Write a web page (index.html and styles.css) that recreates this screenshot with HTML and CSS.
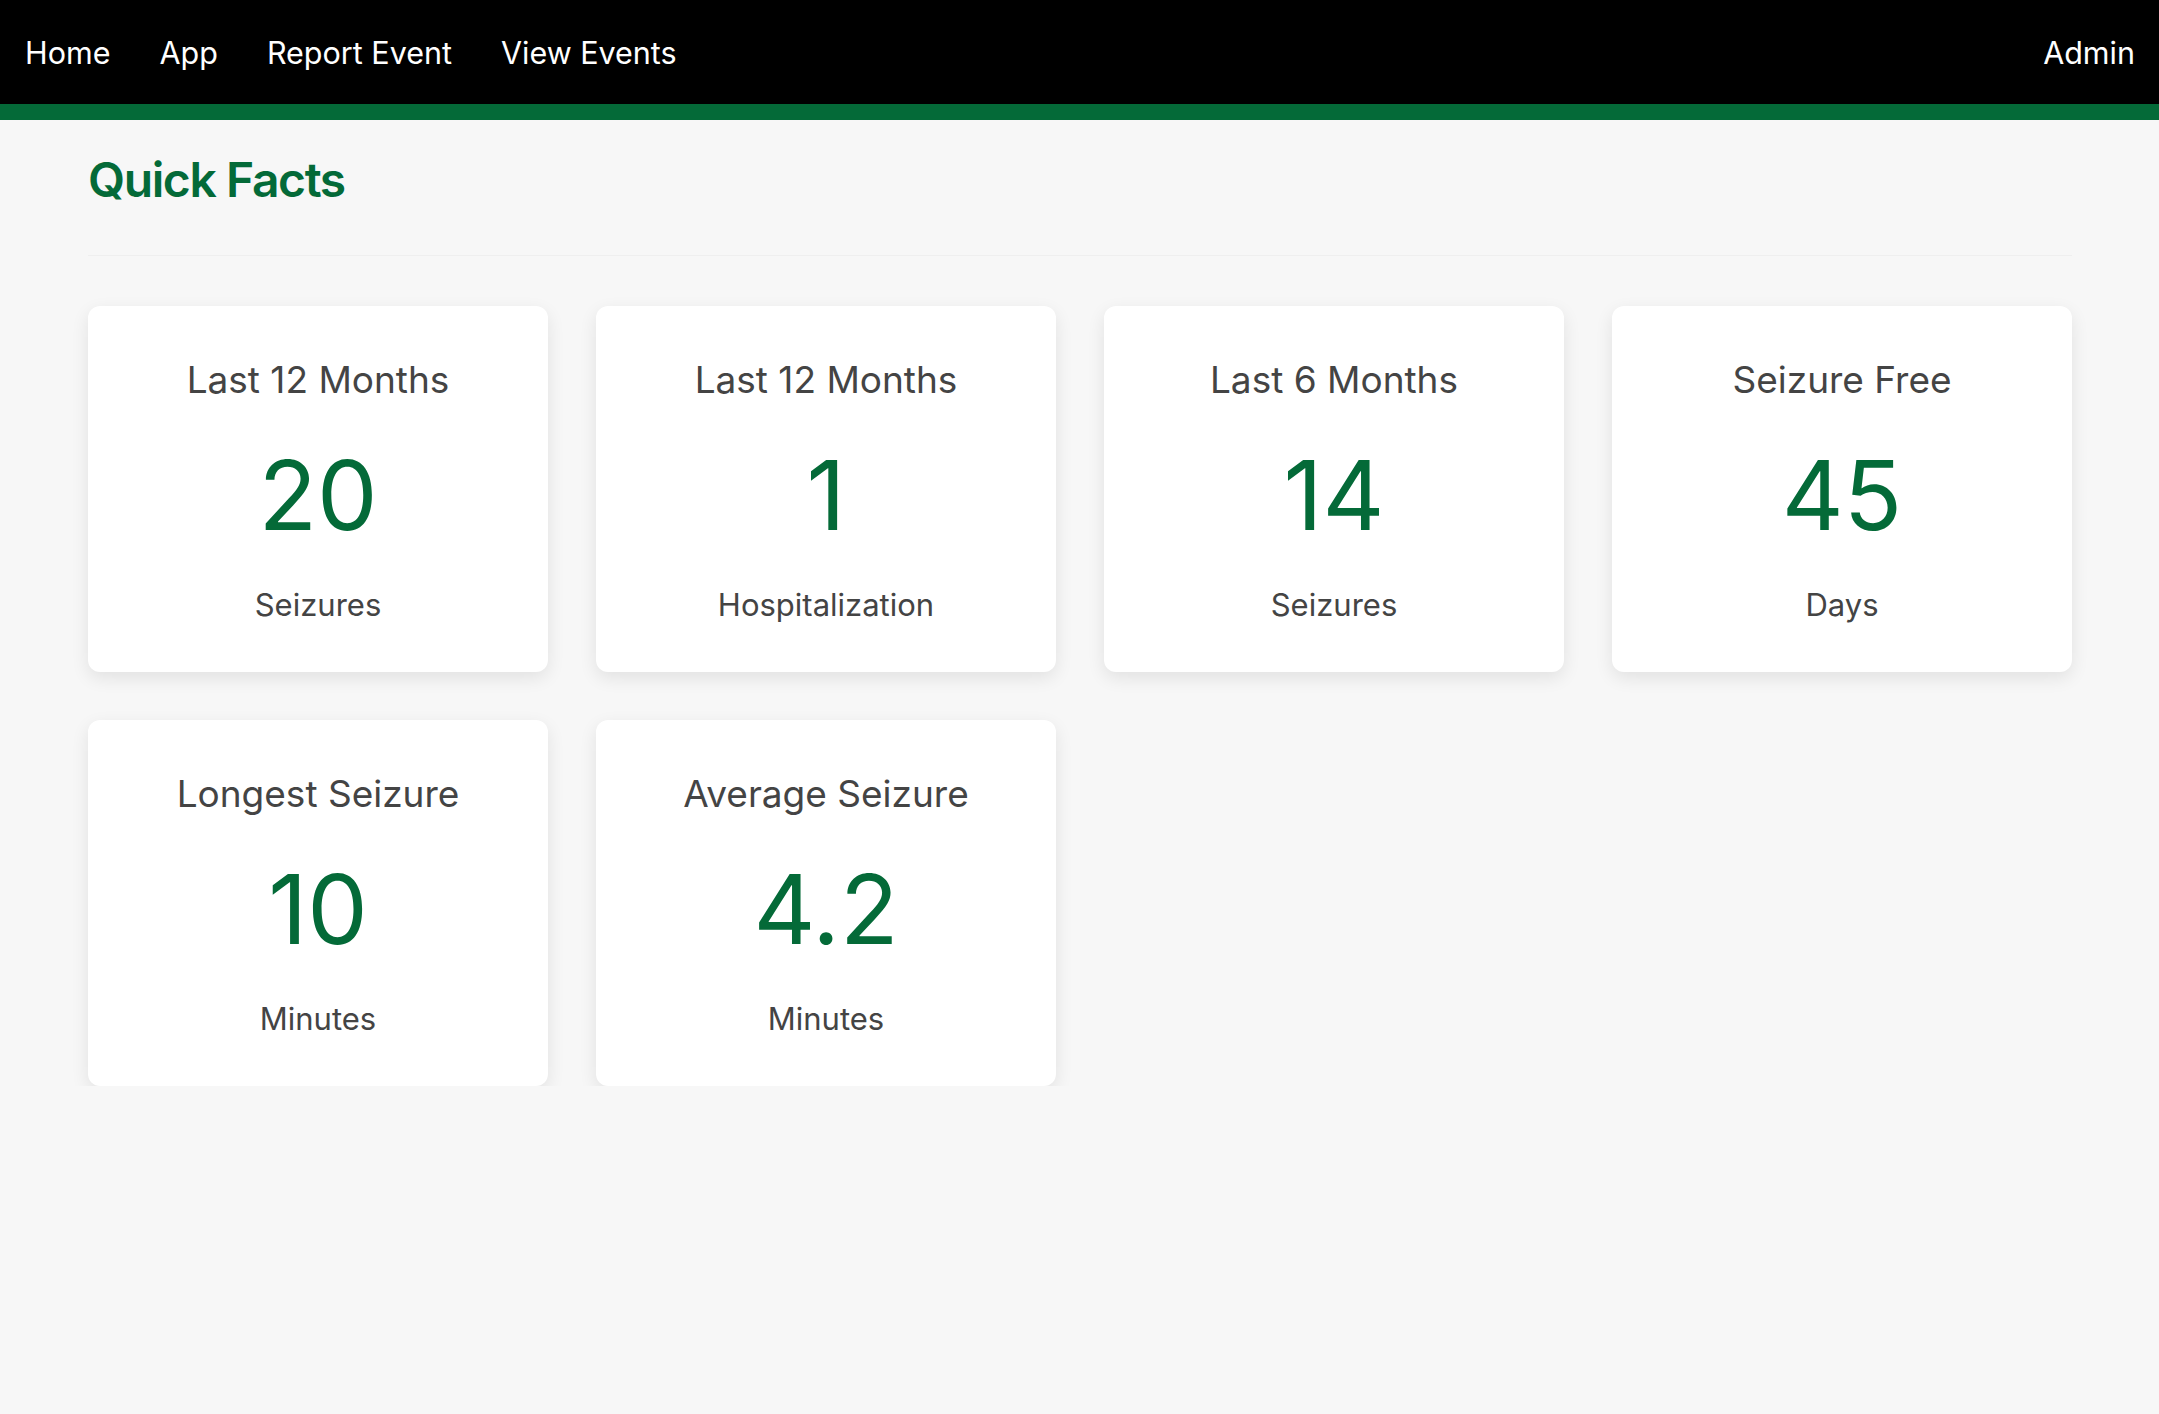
FILE: index.html
```html
<!DOCTYPE html>
<html lang="en">
<head>
<meta charset="utf-8">
<title>Quick Facts</title>
<link rel="stylesheet" href="styles.css">
</head>
<body>
<nav class="navbar">
  <div class="nav-links">
    <a class="nav-link" href="#">Home</a>
    <a class="nav-link" href="#">App</a>
    <a class="nav-link" href="#">Report Event</a>
    <a class="nav-link" href="#">View Events</a>
  </div>
  <a class="nav-link" href="#">Admin</a>
</nav>
<div class="accent-bar"></div>
<main class="container">
  <h1 class="page-title">Quick Facts</h1>
  <hr class="divider">
  <section class="facts-grid">
    <div class="fact-card">
      <div class="fact-title">Last 12 Months</div>
      <div class="fact-value">20</div>
      <div class="fact-unit">Seizures</div>
    </div>
    <div class="fact-card">
      <div class="fact-title">Last 12 Months</div>
      <div class="fact-value">1</div>
      <div class="fact-unit">Hospitalization</div>
    </div>
    <div class="fact-card">
      <div class="fact-title">Last 6 Months</div>
      <div class="fact-value">14</div>
      <div class="fact-unit">Seizures</div>
    </div>
    <div class="fact-card">
      <div class="fact-title">Seizure Free</div>
      <div class="fact-value">45</div>
      <div class="fact-unit">Days</div>
    </div>
    <div class="fact-card">
      <div class="fact-title">Longest Seizure</div>
      <div class="fact-value">10</div>
      <div class="fact-unit">Minutes</div>
    </div>
    <div class="fact-card">
      <div class="fact-title">Average Seizure</div>
      <div class="fact-value">4.2</div>
      <div class="fact-unit">Minutes</div>
    </div>
  </section>
</main>
</body>
</html>
```

FILE: styles.css
```css
* { box-sizing: border-box; }

html, body {
  margin: 0;
  padding: 0;
  background: #f7f7f7;
  font-family: Inter, "Noto Sans", "Liberation Sans", sans-serif;
}

.navbar {
  height: 104px;
  background: #000;
  display: flex;
  align-items: center;
  justify-content: space-between;
  padding: 3px 24px 0 25px;
}

.nav-links {
  display: flex;
  gap: 49px;
}

.nav-link {
  color: #fff;
  text-decoration: none;
  font-size: 30.5px;
  line-height: 1.2;
  font-weight: 400;
}

.accent-bar {
  height: 16px;
  background: #046a38;
}

.container {
  padding: 0 87px 0 88px;
}

.page-title {
  margin: 31px 0 0 0;
  font-size: 48px;
  letter-spacing: -1.4px;
  line-height: 1.2;
  font-weight: 600;
  color: #046a38;
}

.divider {
  margin: 46px 0 0 0;
  border: 0;
  height: 1px;
  background: #efefef;
}

.facts-grid {
  margin-top: 50px;
  display: grid;
  grid-template-columns: repeat(4, 1fr);
  gap: 48px;
}

.fact-card {
  background: #fff;
  border-radius: 12px;
  box-shadow: 0 6px 18px rgba(0, 0, 0, 0.09);
  height: 366px;
  padding-top: 52px;
  text-align: center;
  display: flex;
  flex-direction: column;
  align-items: center;
}

.fact-title {
  font-size: 37px;
  line-height: 1.2;
  color: #444;
}

.fact-value {
  margin-top: 36px;
  font-size: 96px;
  line-height: 1.2;
  color: #046a38;
}

.fact-unit {
  margin-top: 33px;
  font-size: 31px;
  line-height: 1.2;
  color: #444;
}
```
